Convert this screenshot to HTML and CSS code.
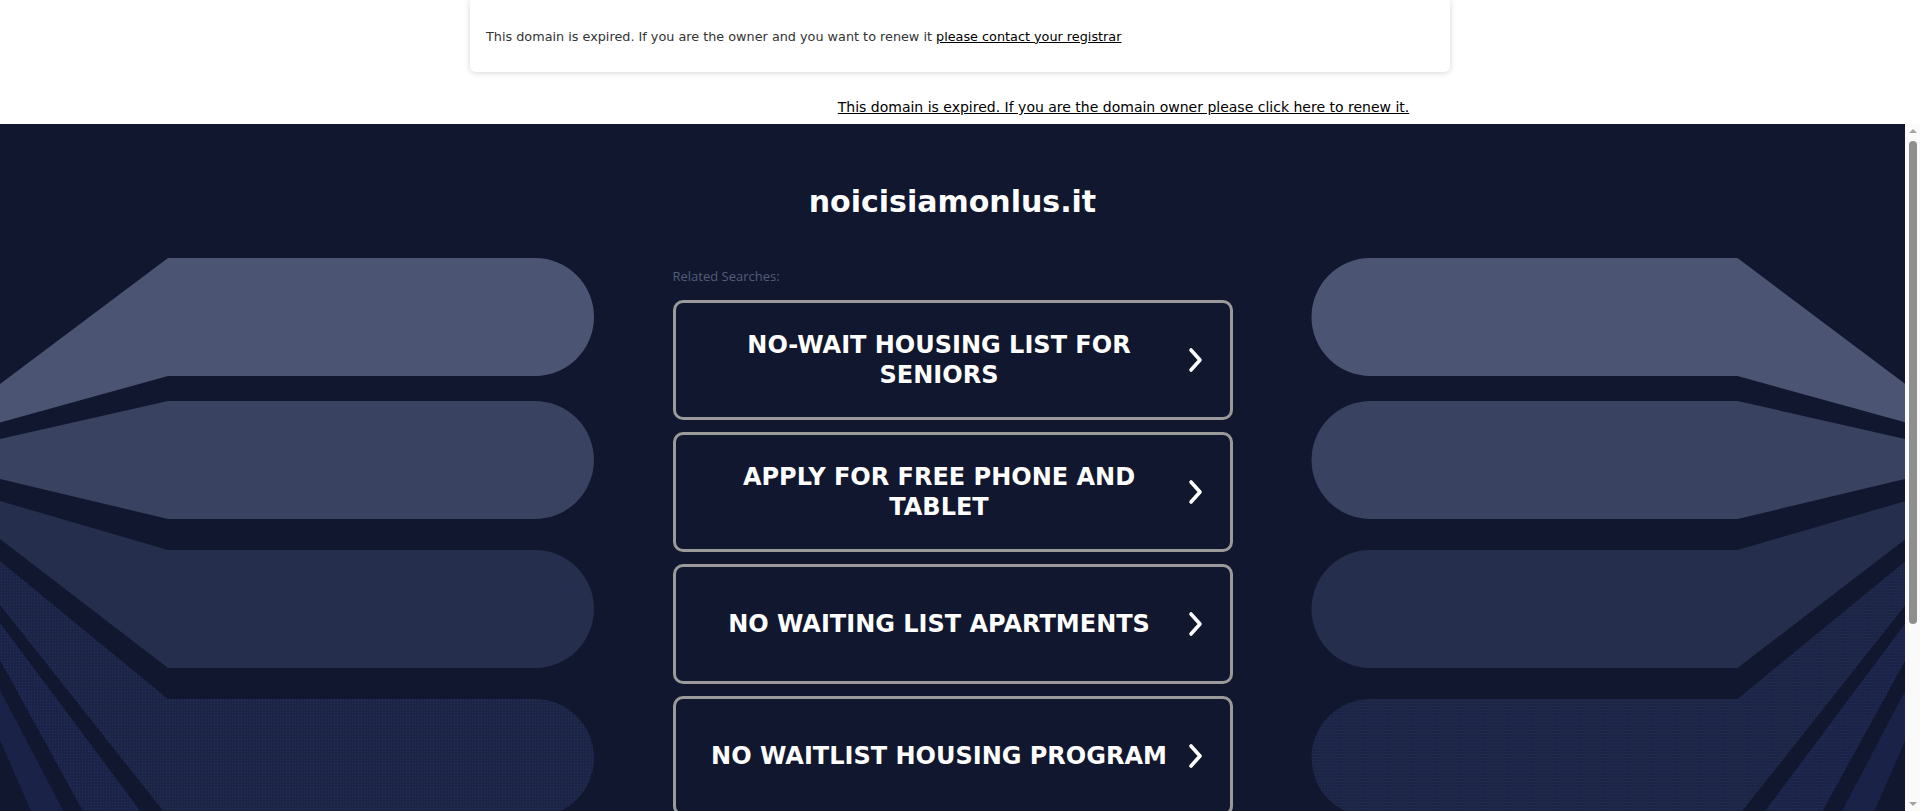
FILE: index.html
```html
<!DOCTYPE html>
<html>
<head>
    <title>noicisiamonlus.it</title>
    <link rel="stylesheet" href="styles.css">
</head>
<body>
    <div class="top">
        <div class="notice">
            <p>This domain is expired. If you are the owner and you want to renew it <a href="#">please contact your registrar</a></p>
        </div>
        <p class="renew"><a href="#">This domain is expired. If you are the domain owner please click here to renew it.</a></p>
    </div>

    <div class="frame">
        <div class="lander">
            <svg class="art" viewBox="0 124 672.5 687" preserveAspectRatio="none">
                <defs>
                    <pattern id="dots" width="3" height="3" patternUnits="userSpaceOnUse">
                        <rect x="1" y="1" width="1" height="1" fill="#27305a"/>
                    </pattern>
                    <g id="fan">
                        <path fill="#4b5573" d="M0,384 L168,258 H535 A59,59 0 0 1 535,376 H168 L0,422.5 Z"/>
                        <path fill="#394260" d="M0,439 L168,401 H535 A59,59 0 0 1 535,519 H168 L0,479 Z"/>
                        <path fill="#252e4d" d="M0,501 L168,550 H535 A59,59 0 0 1 535,668 H168 L0,539 Z"/>
                        <path fill="#1d2547" d="M0,561 L168,699 H535 A59,59 0 0 1 535,817 H168 L0,605 Z"/>
                        <path fill="url(#dots)" d="M0,561 L168,699 H535 A59,59 0 0 1 535,817 H168 L0,605 Z"/>
                        <path fill="#1b2448" d="M0,623 L168,848 H535 V966 H168 L0,660 Z"/>
                        <path fill="url(#dots)" d="M0,623 L168,848 H535 V966 H168 L0,660 Z"/>
                        <path fill="#1a2347" d="M0,690 L110,900 H70 L0,740 Z"/>
                    </g>
                </defs>
                <use href="#fan"/>
            </svg>

            <div class="main">
                <h1>noicisiamonlus.it</h1>
                <p class="related">Related Searches:</p>

                <a class="search" href="#">
                    <span>NO-WAIT HOUSING LIST FOR SENIORS</span>
                    <svg viewBox="0 0 15 26"><polyline points="3,3 12,13 3,23"/></svg>
                </a>
                <a class="search" href="#">
                    <span>APPLY FOR FREE PHONE AND TABLET</span>
                    <svg viewBox="0 0 15 26"><polyline points="3,3 12,13 3,23"/></svg>
                </a>
                <a class="search" href="#">
                    <span>NO WAITING LIST APARTMENTS</span>
                    <svg viewBox="0 0 15 26"><polyline points="3,3 12,13 3,23"/></svg>
                </a>
                <a class="search" href="#">
                    <span>NO WAITLIST HOUSING PROGRAM</span>
                    <svg viewBox="0 0 15 26"><polyline points="3,3 12,13 3,23"/></svg>
                </a>
            </div>

            <svg class="art flip" viewBox="0 124 672.5 687" preserveAspectRatio="none">
                <use href="#fan"/>
            </svg>
        </div>

        <div class="scrollbar">
            <span class="arrow up"></span>
            <span class="thumb"></span>
            <span class="arrow down"></span>
        </div>
    </div>
</body>
</html>
```

FILE: styles.css
```css
body {
    margin: 0;
    height: 811px;
    overflow: hidden;
    background: #fff;
    font-family: "DejaVu Sans", sans-serif;
}

a {
    color: #000;
}

.top {
    height: 124px;
}

.notice {
    width: 980px;
    height: 72px;
    margin: 0 auto;
    padding: 0 16px;
    box-sizing: border-box;
    display: flex;
    align-items: center;
    background: #fff;
    border-radius: 0 0 6px 6px;
    box-shadow: 0 1px 6px rgba(0, 0, 0, 0.16);
    font-size: 12.8px;
    color: #333;
}

.notice p {
    margin: 0;
}

.renew {
    margin: 0;
    padding: 27px 0 0 327px;
    text-align: center;
    font-size: 14px;
    line-height: 17px;
}

.frame {
    display: flex;
    height: 687px;
}

.lander {
    flex: 1;
    display: flex;
    overflow: hidden;
    background: #11172e;
}

.art {
    flex: 1 1 0;
    min-width: 0;
    height: 687px;
}

.flip {
    transform: scaleX(-1);
}

.main {
    flex: none;
    width: 560px;
    padding-top: 60px;
}

h1 {
    margin: 0;
    font-size: 30px;
    line-height: 36px;
    text-align: center;
    color: #fff;
}

.related {
    margin: 48px 0 16px;
    font-family: "Open Sans", sans-serif;
    font-size: 13px;
    line-height: 16px;
    color: #535c7a;
}

.search {
    display: flex;
    align-items: center;
    height: 120px;
    margin-bottom: 12px;
    padding: 0 27px;
    box-sizing: border-box;
    border: 3px solid #9a9a9a;
    border-radius: 10px;
    color: #fff;
    text-decoration: none;
}

.search span {
    flex: 1;
    margin-right: 12px;
    text-align: center;
    font-size: 24px;
    font-weight: bold;
    line-height: 30px;
}

.search svg {
    flex: none;
    width: 15px;
    height: 26px;
    fill: none;
    stroke: #fff;
    stroke-width: 3.6;
    stroke-linecap: round;
    stroke-linejoin: round;
}

.scrollbar {
    width: 15px;
    display: flex;
    flex-direction: column;
    align-items: center;
    background: #fafafa;
}

.arrow {
    width: 0;
    height: 0;
    border-left: 4px solid transparent;
    border-right: 4px solid transparent;
}

.up {
    margin-top: 5px;
    border-bottom: 4px solid #a3a3a3;
}

.down {
    margin-top: auto;
    margin-bottom: 5px;
    border-top: 4px solid #a3a3a3;
}

.thumb {
    width: 8px;
    height: 483px;
    margin-top: 8px;
    border-radius: 4px;
    background: #8f8f8f;
}
```
